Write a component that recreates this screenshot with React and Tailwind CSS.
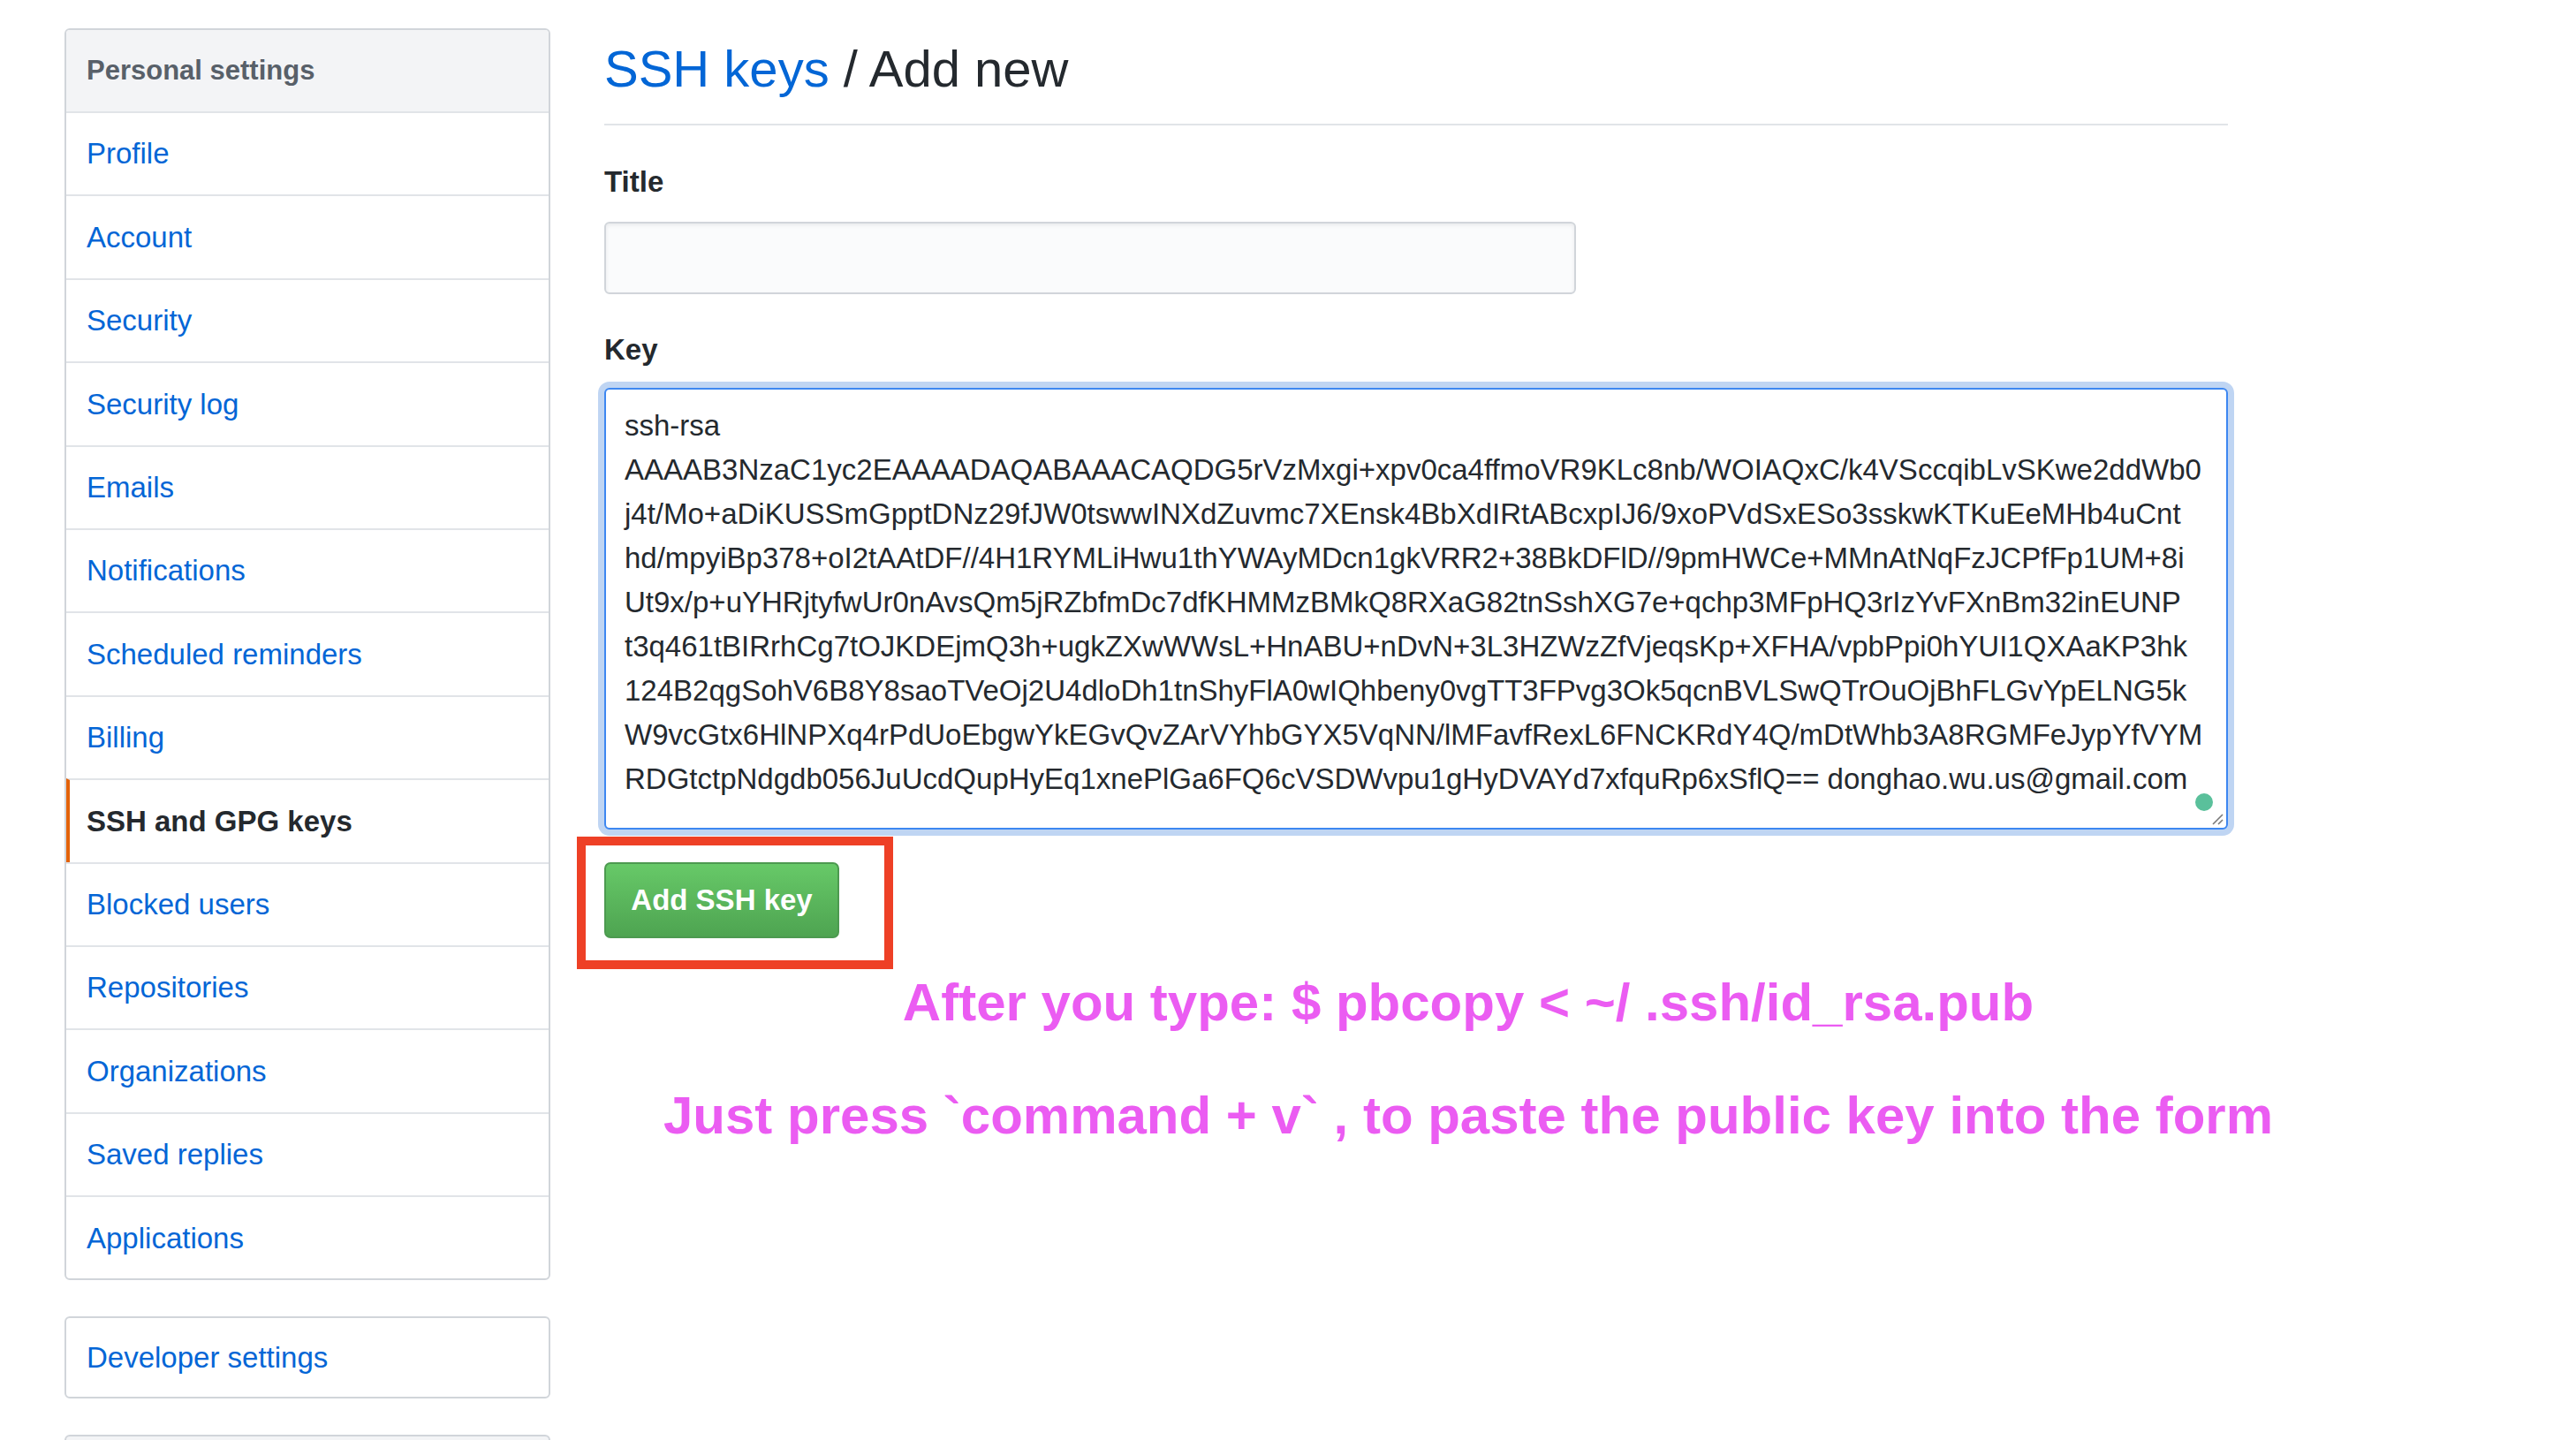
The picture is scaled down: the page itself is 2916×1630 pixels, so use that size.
import { useState } from 'react'

const menu = [
  'Profile',
  'Account',
  'Security',
  'Security log',
  'Emails',
  'Notifications',
  'Scheduled reminders',
  'Billing',
  'SSH and GPG keys',
  'Blocked users',
  'Repositories',
  'Organizations',
  'Saved replies',
  'Applications',
]

const keyLines = [
  'ssh-rsa',
  'AAAAB3NzaC1yc2EAAAADAQABAAACAQDG5rVzMxgi+xpv0ca4ffmoVR9KLc8nb/WOIAQxC/k4VSccqibLvSKwe2ddWb0',
  'j4t/Mo+aDiKUSSmGpptDNz29fJW0tswwINXdZuvmc7XEnsk4BbXdIRtABcxpIJ6/9xoPVdSxESo3sskwKTKuEeMHb4uCnt',
  'hd/mpyiBp378+oI2tAAtDF//4H1RYMLiHwu1thYWAyMDcn1gkVRR2+38BkDFlD//9pmHWCe+MMnAtNqFzJCPfFp1UM+8i',
  'Ut9x/p+uYHRjtyfwUr0nAvsQm5jRZbfmDc7dfKHMMzBMkQ8RXaG82tnSshXG7e+qchp3MFpHQ3rIzYvFXnBm32inEUNP',
  't3q461tBIRrhCg7tOJKDEjmQ3h+ugkZXwWWsL+HnABU+nDvN+3L3HZWzZfVjeqsKp+XFHA/vpbPpi0hYUI1QXAaKP3hk',
  '124B2qgSohV6B8Y8saoTVeOj2U4dloDh1tnShyFlA0wIQhbeny0vgTT3FPvg3Ok5qcnBVLSwQTrOuOjBhFLGvYpELNG5k',
  'W9vcGtx6HlNPXq4rPdUoEbgwYkEGvQvZArVYhbGYX5VqNN/lMFavfRexL6FNCKRdY4Q/mDtWhb3A8RGMFeJypYfVYM',
  'RDGtctpNdgdb056JuUcdQupHyEq1xnePlGa6FQ6cVSDWvpu1gHyDVAYd7xfquRp6xSflQ== donghao.wu.us@gmail.com',
]

function Sidebar() {
  return (
    <div className="w-[550px] shrink-0 flex flex-col">
      <div className="shrink-0 border-2 border-[#d1d5da] rounded-[6px] overflow-hidden">
        <div className="h-[92px] bg-[#f3f4f6] flex items-center pl-[23px] text-[31px] font-semibold text-[#586069]">
          Personal settings
        </div>
        {menu.map((item) => {
          const active = item === 'SSH and GPG keys'
          return (
            <div
              key={item}
              className={
                active
                  ? 'h-[94.4px] border-t-2 border-[#e1e4e8] border-l-[4px] border-l-[#e36209] flex items-center pl-[19px] text-[33px] font-semibold text-[#24292e]'
                  : 'h-[94.4px] border-t-2 border-[#e1e4e8] flex items-center pl-[23px] text-[33px] text-[#0366d6]'
              }
            >
              {item}
            </div>
          )
        })}
      </div>
      <div className="shrink-0 mt-[41px] h-[93px] border-2 border-[#d1d5da] rounded-[6px] flex items-center pl-[23px] text-[33px] text-[#0366d6]">
        Developer settings
      </div>
      <div className="shrink-0 mt-[41px] h-[93px] border-2 border-[#d1d5da] rounded-[6px] bg-[#f3f4f6]" />
    </div>
  )
}

function KeyBox() {
  return (
    <div className="relative h-[500px] w-[1838px] border-2 border-[#3d87f1] rounded-[6px] shadow-[0_0_0_7px_#bfd5f3] bg-white pl-[21px] pt-[16px]">
      {keyLines.map((line, i) => (
        <div key={i} className="h-[50px] leading-[50px] text-[33px] text-[#24292e] whitespace-nowrap">
          {line}
        </div>
      ))}
      <span className="absolute left-[1799px] top-[457px] w-[20px] h-[20px] rounded-full bg-[#5ac09b]" />
      <svg className="absolute right-[3px] bottom-[3px]" width="16" height="16" viewBox="0 0 16 16">
        <path d="M15 4 L4 15 M15 10 L10 15" stroke="#7a7a7a" strokeWidth="1.6" />
      </svg>
    </div>
  )
}

export default function App() {
  const [title, setTitle] = useState('')

  return (
    <div
      className="w-[2916px] h-[1630px] bg-white overflow-hidden flex items-start gap-[61px] pl-[73px] pt-[32px]"
      style={{ fontFamily: '"Liberation Sans", Arial, sans-serif' }}
    >
      <Sidebar />

      <div className="w-[1838px] shrink-0 flex flex-col">
        <h1 className="mt-[10px] pb-[26px] border-b-2 border-[#e1e4e8] text-[58px] leading-[72px] font-normal text-[#24292e]">
          <span className="text-[#0366d6]">SSH keys</span> / Add new
        </h1>

        <label className="mt-[44px] text-[33px] leading-[40px] font-bold text-[#24292e]">Title</label>
        <input
          value={title}
          onChange={(e) => setTitle(e.target.value)}
          className="mt-[25px] h-[82px] w-[1100px] bg-[#fafbfc] border-2 border-[#d1d5da] rounded-[6px] shadow-[inset_0_2px_4px_rgba(27,31,35,0.075)] px-[20px] text-[33px] outline-none"
        />

        <label className="mt-[43px] text-[33px] leading-[40px] font-bold text-[#24292e]">Key</label>
        <div className="mt-[23px]">
          <KeyBox />
        </div>

        <div className="relative mt-[37px] w-[266px]">
          <button className="h-[86px] w-[266px] rounded-[7px] border-2 border-[#4d9a50] bg-gradient-to-b from-[#67c968] to-[#4ea451] text-white text-[33px] font-bold">
            Add SSH key
          </button>
          <div className="absolute left-[-31px] top-[-29px] w-[358px] h-[150px] border-[10px] border-[#ee4026]" />
        </div>

        <div className="w-[1956px] text-center text-[#eb5cf2] font-bold text-[60px] leading-[72px]">
          <p className="mt-[37px]">After you type: $ pbcopy &lt; ~/ .ssh/id_rsa.pub</p>
          <p className="mt-[56px]">Just press `command + v` , to paste the public key into the form</p>
        </div>
      </div>
    </div>
  )
}
